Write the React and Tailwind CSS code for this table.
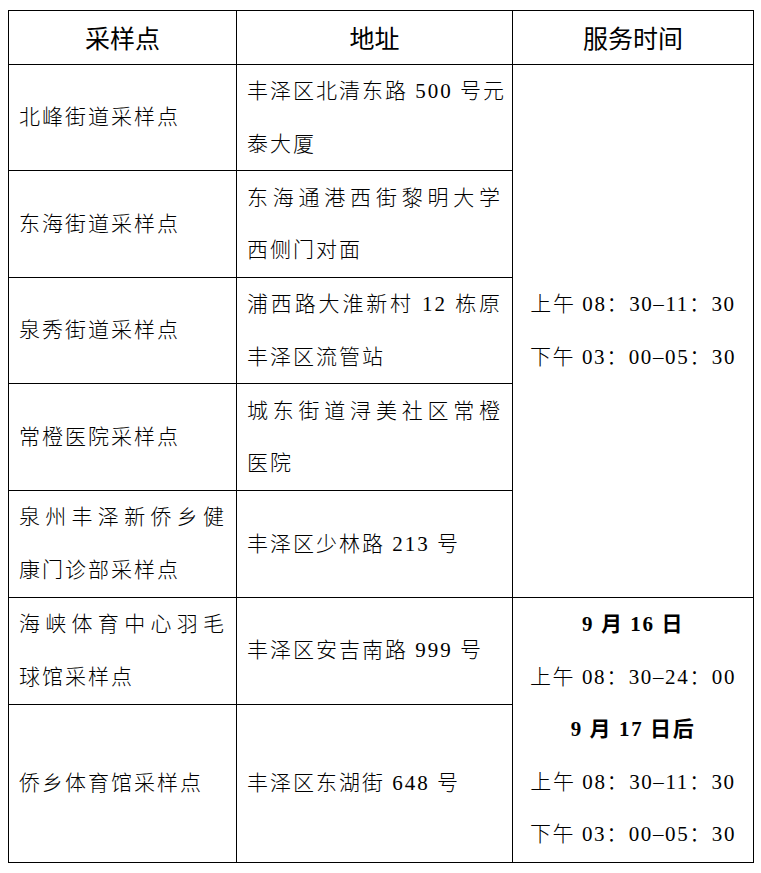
const body = { fontFamily: '"Liberation Serif", "Noto Sans CJK SC", serif' };
const head = { fontFamily: '"Noto Sans CJK SC", sans-serif' };

// one line of a cell; "fill" spreads the line over the full cell width
function Line({ children, fill }) {
  return (
    <div className={fill ? "whitespace-nowrap text-justify [text-align-last:justify] tracking-[2px]" : "whitespace-nowrap tracking-[2px]"}>
      {children}
    </div>
  );
}

const rows = [
  { h: "h-[106px]", name: [["北峰街道采样点"]], addr: [["丰泽区北清东路 500 号元", true], ["泰大厦"]] },
  { h: "h-[107px]", name: [["东海街道采样点"]], addr: [["东海通港西街黎明大学", true], ["西侧门对面"]] },
  { h: "h-[106px]", name: [["泉秀街道采样点"]], addr: [["浦西路大淮新村 12 栋原", true], ["丰泽区流管站"]] },
  { h: "h-[107px]", name: [["常橙医院采样点"]], addr: [["城东街道浔美社区常橙", true], ["医院"]] },
  { h: "h-[106px]", name: [["泉州丰泽新侨乡健", true], ["康门诊部采样点"]], addr: [["丰泽区少林路 213 号"]] },
  { h: "h-[107px]", name: [["海峡体育中心羽毛", true], ["球馆采样点"]], addr: [["丰泽区安吉南路 999 号"]] },
  { h: "h-[158px]", name: [["侨乡体育馆采样点"]], addr: [["丰泽区东湖街 648 号"]] },
];

export default function App() {
  const cell = "border border-black align-middle px-[10px] py-0";
  const time = "border border-black align-middle text-center whitespace-nowrap tracking-[1.6px] p-0";
  return (
    <div className="w-[761px] h-[873px] bg-white pt-[10px] pl-[8px]">
      <table className="table-fixed border-collapse w-[745px] text-black text-[21px] leading-[52.6px] font-light" style={body}>
        <colgroup>
          <col className="w-[228px]" />
          <col className="w-[276px]" />
          <col className="w-[241px]" />
        </colgroup>
        <thead>
          <tr className="h-[54px]">
            {["采样点", "地址", "服务时间"].map(t => (
              <th key={t} className="border border-black text-center align-middle text-[25px] font-normal leading-none p-0" style={head}>
                {t}
              </th>
            ))}
          </tr>
        </thead>
        <tbody>
          {rows.map((r, i) => (
            <tr key={i} className={r.h}>
              <td className={cell}>
                {r.name.map(([t, f]) => <Line key={t} fill={f}>{t}</Line>)}
              </td>
              <td className={cell}>
                {r.addr.map(([t, f]) => <Line key={t} fill={f}>{t}</Line>)}
              </td>
              {i === 0 && (
                <td rowSpan={5} className={time}>
                  <div>上午 08：30–11：30</div>
                  <div>下午 03：00–05：30</div>
                </td>
              )}
              {i === 5 && (
                <td rowSpan={2} className={time}>
                  <div className="font-bold">9 月 16 日</div>
                  <div>上午 08：30–24：00</div>
                  <div className="font-bold">9 月 17 日后</div>
                  <div>上午 08：30–11：30</div>
                  <div>下午 03：00–05：30</div>
                </td>
              )}
            </tr>
          ))}
        </tbody>
      </table>
    </div>
  );
}
